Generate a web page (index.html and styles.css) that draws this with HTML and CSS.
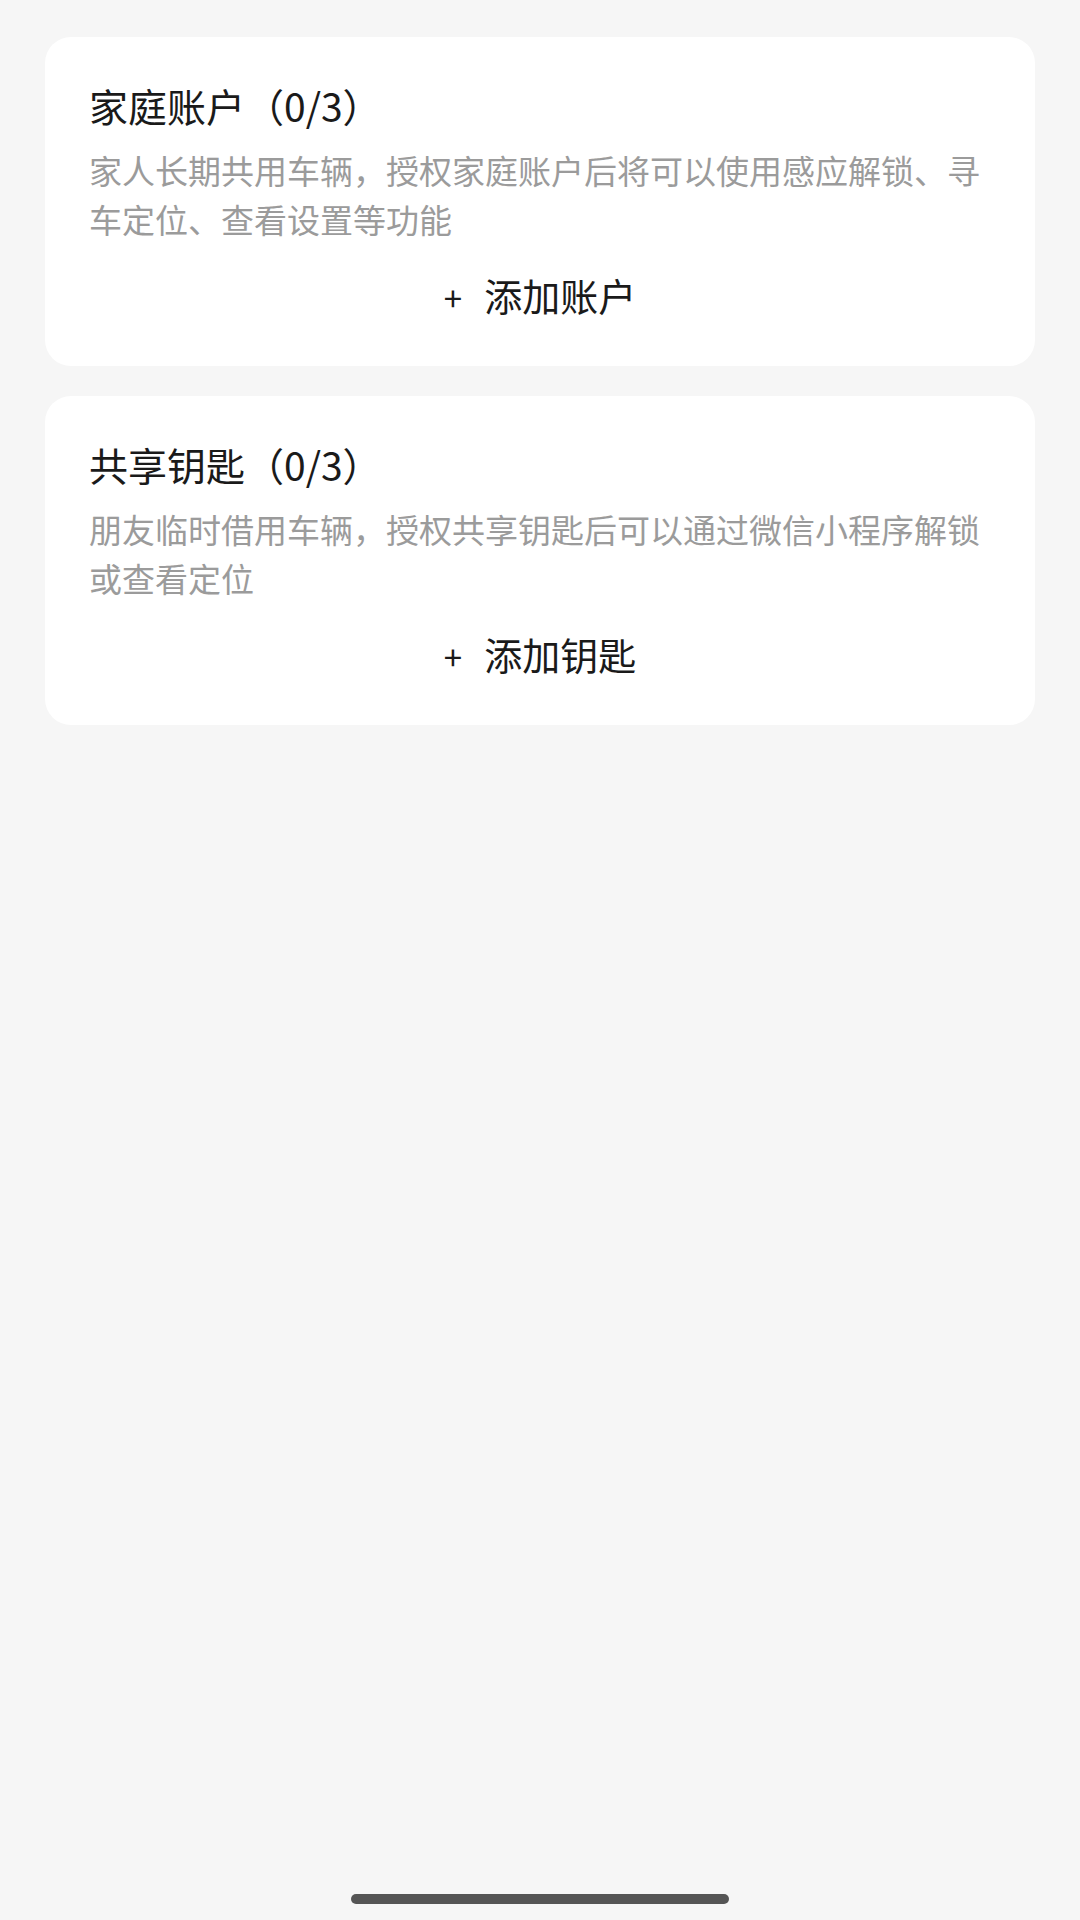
FILE: index.html
```html
<!DOCTYPE html>
<html lang="zh-CN">
<head>
  <meta charset="UTF-8" />
  <title>钥匙管理</title>
  <link rel="stylesheet" href="styles.css">
</head>
<body>
  <div class="page">
    <!-- 家庭账户 -->
    <div class="card">
      <div class="card-title">家庭账户（0/3）</div>
      <div class="card-desc">家人长期共用车辆，授权家庭账户后将可以使用感应解锁、寻车定位、查看设置等功能</div>
      <div class="card-add"><span class="plus">+</span>添加账户</div>
    </div>

    <!-- 共享钥匙 -->
    <div class="card">
      <div class="card-title">共享钥匙（0/3）</div>
      <div class="card-desc">朋友临时借用车辆，授权共享钥匙后可以通过微信小程序解锁或查看定位</div>
      <div class="card-add"><span class="plus">+</span>添加钥匙</div>
    </div>
  </div>

  <div class="home-bar"></div>
</body>
</html>
```

FILE: styles.css
```css
body {
  margin: 0;
  background: #f6f6f6;
  font-family: "Noto Sans CJK SC", "Noto Sans", sans-serif;
  height: 1920px;
  position: relative;
  overflow: hidden;
}
.page {
  padding: 37px 45px;
  display: flex;
  flex-direction: column;
  gap: 30px;
}
.card {
  background: #fff;
  border-radius: 26px;
  padding: 43px 44px 44px;
}
.card-title {
  font-size: 39px;
  line-height: 50px;
  color: #1a1a1a;
}
.card-desc {
  margin-top: 16px;
  font-size: 33px;
  line-height: 49px;
  color: #9b9b9b;
}
.card-add {
  margin-top: 26px;
  font-size: 38px;
  line-height: 50px;
  color: #1a1a1a;
  text-align: center;
}
.plus { margin-right: 22px; font-size: 33px; }

.home-bar {
  position: absolute;
  left: 351px;
  bottom: 16px;
  width: 378px;
  height: 10px;
  border-radius: 5px;
  background: #555;
}
```
